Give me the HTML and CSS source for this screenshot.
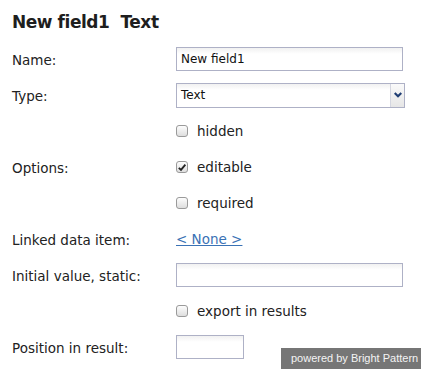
FILE: index.html
```html
<!DOCTYPE html>
<html>
<head>
<meta charset="utf-8">
<link rel="stylesheet" href="styles.css">
</head>
<body>
<div class="page">
  <h1 class="title">New field1&nbsp;&nbsp;Text</h1>
  <div class="form">
    <div class="label">Name:</div>
    <div class="ctl"><input class="text wide" type="text" value="New field1"></div>

    <div class="label">Type:</div>
    <div class="ctl">
      <div class="select">
        <span class="select-value">Text</span>
        <span class="select-btn">
          <svg width="8" height="6" viewBox="0 0 8 6"><path d="M0.7 1 L4 4.3 L7.3 1" fill="none" stroke="#1f3d73" stroke-width="2.2"/></svg>
        </span>
      </div>
    </div>

    <div class="label"></div>
    <div class="ctl"><label class="check"><span class="box"></span>hidden</label></div>

    <div class="label">Options:</div>
    <div class="ctl"><label class="check"><span class="box checked"><svg width="11" height="11" viewBox="0 0 11 11"><path d="M2 5.8 L4.4 8.2 L9.2 2.4" fill="none" stroke="#222" stroke-width="2"/></svg></span>editable</label></div>

    <div class="label"></div>
    <div class="ctl"><label class="check"><span class="box"></span>required</label></div>

    <div class="label">Linked data item:</div>
    <div class="ctl"><a class="link" href="#">&lt; None &gt;</a></div>

    <div class="label">Initial value, static:</div>
    <div class="ctl"><input class="text wide" type="text" value=""></div>

    <div class="label"></div>
    <div class="ctl"><label class="check"><span class="box"></span>export in results</label></div>

    <div class="label">Position in result:</div>
    <div class="ctl"><input class="text short" type="text" value=""></div>
  </div>
</div>
<div class="powered">powered by Bright Pattern</div>
</body>
</html>
```
FILE: styles.css
```css
html, body {
  margin: 0;
  padding: 0;
  background: #fff;
}
body {
  width: 421px;
  height: 369px;
  overflow: hidden;
  font-family: "DejaVu Sans", sans-serif;
  font-size: 13.5px;
  color: #222;
}
.page {
  padding-left: 12px;
}
.title {
  margin: 0;
  height: 41px;
  padding-top: 10px;
  box-sizing: border-box;
  font-size: 17px;
  font-weight: bold;
  letter-spacing: -0.45px;
  color: #1e1e1e;
  line-height: 24px;
}
.form {
  display: grid;
  grid-template-columns: 164px 1fr;
  grid-auto-rows: 36px;
  align-items: center;
}
.label {
  color: #222;
  padding-top: 2px;
}
.ctl {
  display: flex;
  align-items: center;
}
.text {
  box-sizing: border-box;
  height: 24px;
  border: 1px solid #aeb1c6;
  border-radius: 0;
  padding: 0 4px;
  font-family: "DejaVu Sans", sans-serif;
  font-size: 12px;
  color: #111;
  background: linear-gradient(#f1f1f1, #fff 6px);
  outline: none;
}
.wide { width: 227px; }
.short { width: 68px; }
.select {
  box-sizing: border-box;
  width: 229px;
  height: 25px;
  border: 1px solid #aeb1c6;
  display: flex;
  align-items: stretch;
  background: linear-gradient(#f1f1f1, #fff 6px);
}
.select-value {
  flex: 1;
  display: flex;
  align-items: center;
  padding-left: 4px;
  font-size: 12px;
  color: #111;
}
.select-btn {
  width: 13px;
  border-left: 1px solid #d4d6e0;
  background: linear-gradient(#fafafa, #e6e6e6);
  display: flex;
  align-items: center;
  justify-content: center;
}
.check {
  display: flex;
  align-items: center;
  gap: 9px;
  color: #222;
}
.box {
  box-sizing: border-box;
  width: 12px;
  height: 12px;
  border: 1px solid #9a9a9a;
  border-radius: 3px;
  background: linear-gradient(#fdfdfd, #dedede);
  display: flex;
  align-items: center;
  justify-content: center;
}
.link {
  color: #3a72b5;
  text-decoration: underline;
}
.powered {
  position: absolute;
  left: 281px;
  top: 348px;
  width: 140px;
  height: 21px;
  background: #767676;
  color: #f4f4f4;
  font-family: "Liberation Sans", Arial, sans-serif;
  font-size: 11px;
  line-height: 21px;
  padding-left: 10px;
  box-sizing: border-box;
}
```
